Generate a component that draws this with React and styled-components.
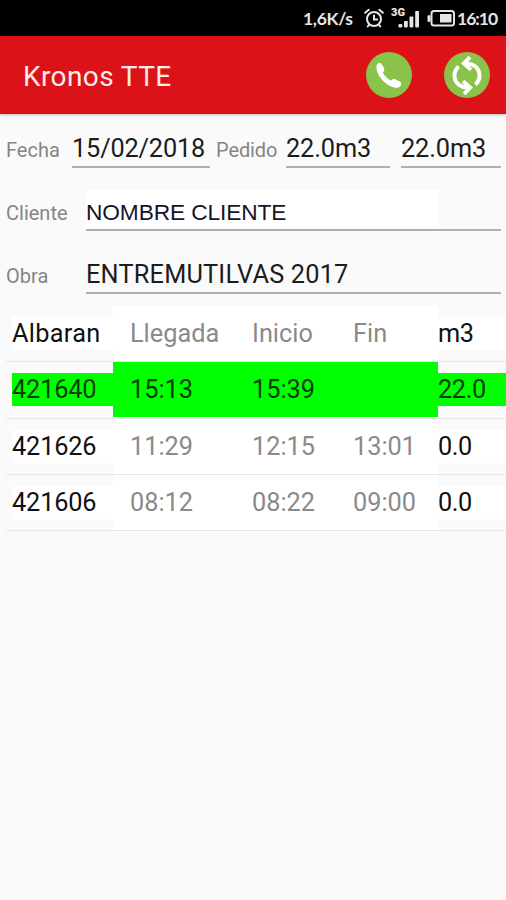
import React from 'react';
import styled, { createGlobalStyle } from 'styled-components';

const GlobalStyle = createGlobalStyle`
  * { box-sizing: border-box; }
  body { margin: 0; background: #fafafa; font-family: Roboto, sans-serif; }
`;

const Screen = styled.main`
  width: 506px;
  height: 900px;
  overflow: hidden;
  background: #fafafa;
  display: flex;
  flex-direction: column;
`;

const StatusBar = styled.div`
  height: 36px;
  flex: none;
  background: #000;
  color: #e6e6e6;
  display: flex;
  align-items: center;
  justify-content: flex-end;
  padding-right: 9px;
  svg { display: block; flex: none; }
`;

const StatusText = styled.span`
  font: 700 17.5px/36px Lato, sans-serif;
  white-space: nowrap;
  width: ${(p) => p.$w}px;
  letter-spacing: ${(p) => p.$ls}px;
  padding-top: 1px;
`;

const AppBar = styled.header`
  height: 78px;
  flex: none;
  background: #db1218;
  border-bottom: 1px solid #c9141a;
  box-shadow: 0 1px 3px rgba(0, 0, 0, 0.25);
  display: flex;
  align-items: center;
  padding: 0 16px 0 23px;
`;

const Title = styled.h1`
  margin: 4px auto 0 0;
  font-size: 28px;
  font-weight: 400;
  line-height: 36px;
  letter-spacing: 0.4px;
  color: #fdeaea;
`;

const RoundButton = styled.button`
  width: 46px;
  height: 46px;
  padding: 0;
  border: 0;
  border-radius: 50%;
  background: #8bc34a;
  margin-left: ${(p) => p.$gap || 0}px;
  svg { display: block; }
`;

const Form = styled.section`
  padding: 5px 5px 0 6px;
  flex: none;
`;

const FormRow = styled.div`
  height: 63px;
  display: flex;
  align-items: flex-start;
  padding-top: 8px;
`;

const Label = styled.label`
  width: ${(p) => p.$w}px;
  flex: none;
  font-size: 20px;
  line-height: 46px;
  color: #858585;
  letter-spacing: ${(p) => p.$ls || 0}px;
`;

const Field = styled.div`
  flex: ${(p) => (p.$w ? `0 0 ${p.$w}px` : 1)};
  height: 41px;
  margin-right: ${(p) => p.$gap || 0}px;
  border-bottom: 2px solid #b0b0b0;
  font-size: 25.3px;
  line-height: 43px;
  letter-spacing: ${(p) => p.$ls || 0}px;
  color: #1c1c1c;
  white-space: nowrap;
`;

const PlainValue = styled.span`
  display: block;
  width: 353px;
  height: 39px;
  background: #fff;
  font: 22.7px/44px "Liberation Sans", sans-serif;
  letter-spacing: ${(p) => p.$ls}px;
  color: #14142a;
`;

const Table = styled.section`
  padding-left: 6px;
  margin-top: -2px;
  flex: none;
`;

const Row = styled.div`
  height: 56.25px;
  display: grid;
  grid-template-columns: 101px 325px 68px;
  align-items: center;
  padding-left: 6px;
  border-bottom: 1.5px solid #e6e6e6;
  font-size: 25.3px;
  white-space: nowrap;
`;

const EdgeCell = styled.span`
  height: 33px;
  line-height: 34px;
  background: ${(p) => (p.$active ? '#00ff00' : '#fff')};
  color: ${(p) => (p.$active ? '#073c07' : '#111')};
  letter-spacing: ${(p) => p.$ls || 0}px;
`;

const Times = styled.div`
  height: 100%;
  display: grid;
  grid-template-columns: 122px 101px 1fr;
  align-items: center;
  padding-left: 17px;
  background: ${(p) => (p.$active ? '#00ff00' : '#fff')};
  border-bottom: ${(p) => (p.$active ? '1px solid #fff' : '0')};
  color: ${(p) => (p.$active ? '#073c07' : '#8a8a8a')};
  line-height: 35px;
`;

const AlarmIcon = () => (
  <svg width="20" height="20" viewBox="0 0 20 20" fill="none" stroke="#e6e6e6" strokeWidth="2" strokeLinecap="round">
    <circle cx="10" cy="11" r="7" />
    <path d="M10 7.5V11.5H13.2M1.2 4.8 4.7 1.8M18.8 4.8 15.3 1.8M5.2 16.5 3.8 18.5M14.8 16.5 16.2 18.5" />
  </svg>
);

const SignalText = styled.text`
  font: 900 10px Roboto, sans-serif;
  fill: #e6e6e6;
`;

const SignalIcon = () => (
  <svg width="29" height="22" viewBox="0 0 29 22" fill="#e6e6e6">
    <SignalText x="0" y="8.5" textLength="14" lengthAdjust="spacingAndGlyphs">3G</SignalText>
    <rect x="7.5" y="17" width="3.8" height="3.4" rx="1.2" />
    <rect x="13" y="14" width="3.8" height="6.4" rx="0.8" />
    <rect x="18.5" y="9.5" width="3.8" height="10.9" rx="0.8" />
    <rect x="24.2" y="4" width="3.8" height="16.4" rx="0.8" />
  </svg>
);

const BatteryIcon = () => (
  <svg width="29" height="18" viewBox="0 0 29 18" fill="none" stroke="#e6e6e6" strokeWidth="2">
    <rect x="4.5" y="2" width="22.5" height="14.5" rx="2.5" />
    <rect x="13" y="5" width="11.5" height="8.5" fill="#e6e6e6" stroke="none" />
    <path d="M2 7.5v4" strokeWidth="3" strokeLinecap="round" />
  </svg>
);

const PhoneIcon = () => (
  <svg width="46" height="46" viewBox="0 0 46 46">
    <path
      d="M11 12.5C12 10.5 14.6 10.3 15.8 12.2L18 16.2C18.8 17.8 18.3 19.2 16.8 20.6C18.4 23.9 21.2 26.8 25 28.8C26.4 27.1 28 26.6 29.6 27.4L33.8 29.6C35.6 30.7 35.8 32.4 34.4 34C32.6 36 30.2 36.2 27.4 35.3C19.8 33 13.4 26.5 11 19C10.2 16.3 10.1 14.2 11 12.5Z"
      fill="#fff"
    />
  </svg>
);

const SyncIcon = () => (
  <svg width="46" height="46" viewBox="0 0 46 46" fill="none" stroke="#fff" strokeWidth="4">
    <path d="M21 12C28 10.5 35.5 15.5 35.5 23.5C35.5 27.2 34 30.3 31.3 32.6" />
    <path d="M25 35C18 36.5 10.5 31.5 10.5 23.5C10.5 19.8 12 16.7 14.7 14.4" />
    <path d="M26 5.2 19.8 11.4 27 17.8" strokeWidth="3.8" />
    <path d="M20 41.8 26.2 35.6 19 29.2" strokeWidth="3.8" />
  </svg>
);

const Gap = styled.i`
  width: ${(p) => p.$w}px;
`;

const rows = [
  { id: 'Albaran', times: ['Llegada', 'Inicio', 'Fin'], m3: 'm3' },
  { id: '421640', times: ['15:13', '15:39', ''], m3: '22.0', active: true },
  { id: '421626', times: ['11:29', '12:15', '13:01'], m3: '0.0' },
  { id: '421606', times: ['08:12', '08:22', '09:00'], m3: '0.0' },
];

export default function App() {
  return (
    <Screen>
      <GlobalStyle />
      <StatusBar>
        <StatusText $w={50} $ls={-0.3}>1,6K/s</StatusText>
        <Gap $w={11} />
        <AlarmIcon />
        <Gap $w={7} />
        <SignalIcon />
        <Gap $w={7} />
        <BatteryIcon />
        <Gap $w={1} />
        <StatusText $w={40} $ls={-1}>16:10</StatusText>
      </StatusBar>
      <AppBar>
        <Title>Kronos TTE</Title>
        <RoundButton aria-label="Llamar"><PhoneIcon /></RoundButton>
        <RoundButton aria-label="Actualizar" $gap={32}><SyncIcon /></RoundButton>
      </AppBar>
      <Form>
        <FormRow>
          <Label $w={66}>Fecha</Label>
          <Field $w={138} $gap={6} $ls={-0.15}>15/02/2018</Field>
          <Label $w={70} $ls={-0.1}>Pedido</Label>
          <Field $w={104} $gap={11} $ls={-0.1}>22.0m3</Field>
          <Field $ls={-0.1}>22.0m3</Field>
        </FormRow>
        <FormRow>
          <Label $w={80}>Cliente</Label>
          <Field><PlainValue $ls={-0.1}>NOMBRE CLIENTE</PlainValue></Field>
        </FormRow>
        <FormRow>
          <Label $w={80}>Obra</Label>
          <Field $ls={0.2}>ENTREMUTILVAS 2017</Field>
        </FormRow>
      </Form>
      <Table>
        {rows.map((r, i) => (
          <Row key={r.id}>
            <EdgeCell $active={r.active} $ls={i ? -0.15 : 0.3}>{r.id}</EdgeCell>
            <Times $active={r.active}>
              {r.times.map((t, n) => <span key={n}>{t}</span>)}
            </Times>
            <EdgeCell $active={r.active} $ls={-0.4}>{r.m3}</EdgeCell>
          </Row>
        ))}
      </Table>
    </Screen>
  );
}
